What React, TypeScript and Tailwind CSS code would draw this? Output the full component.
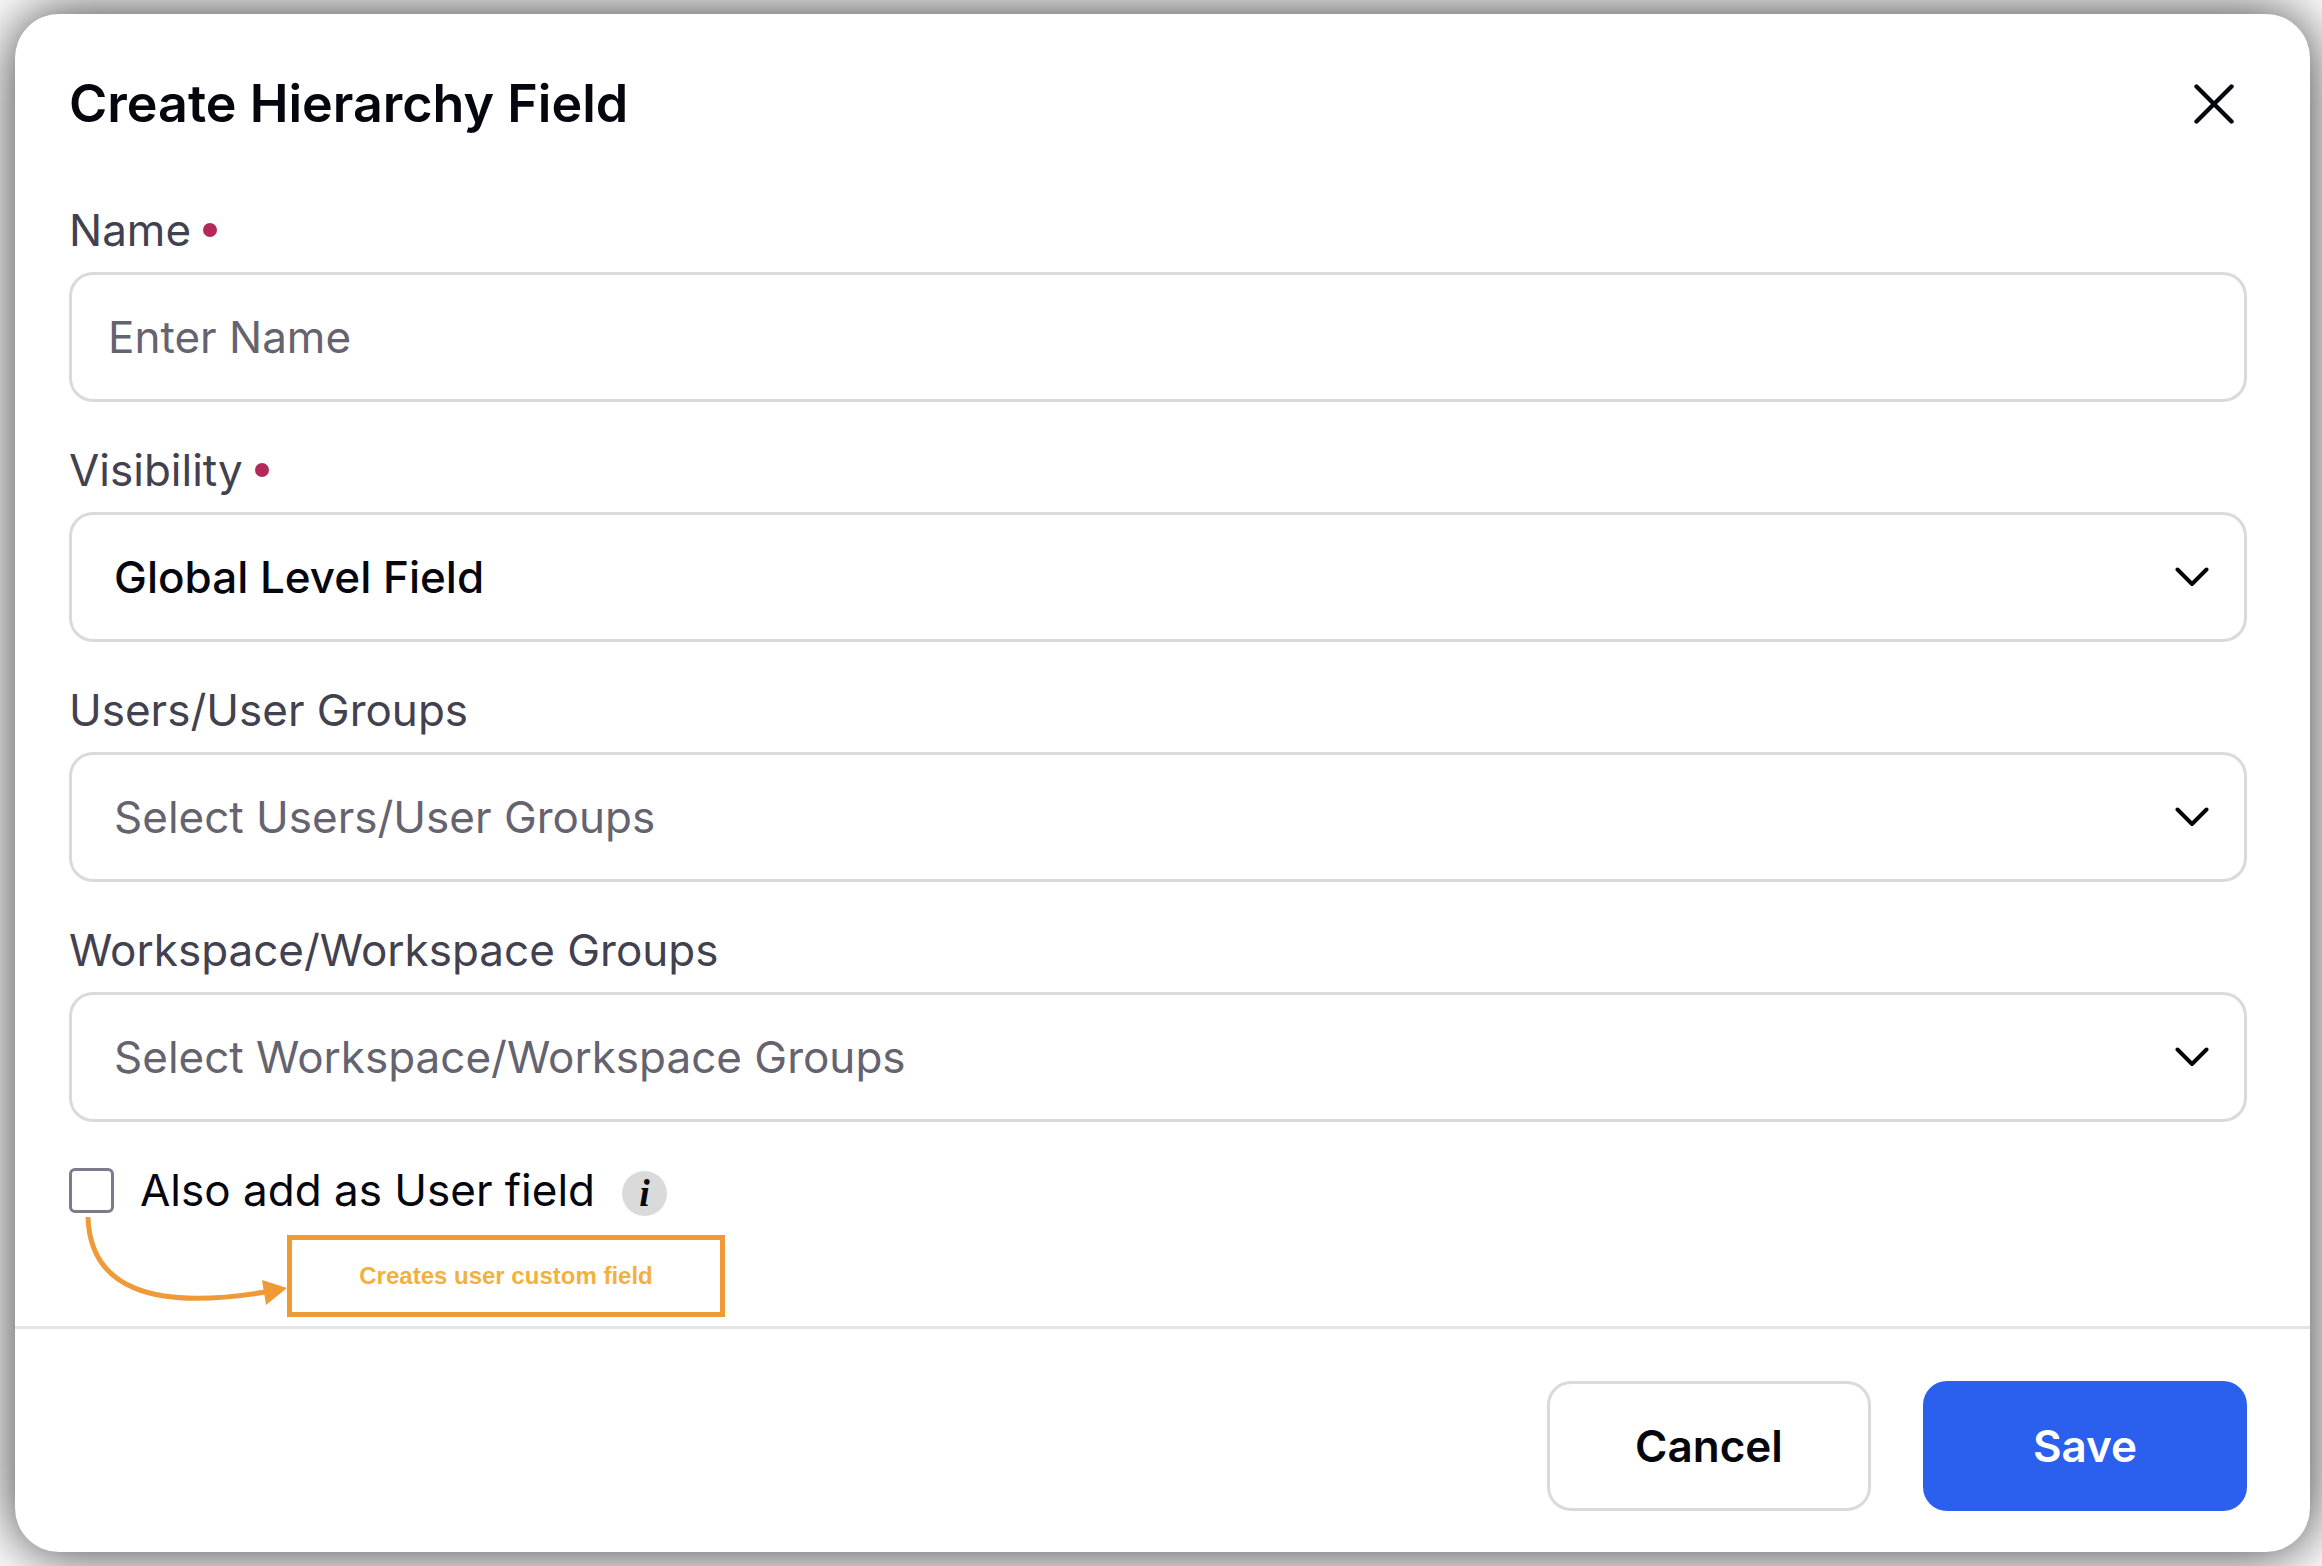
import { useState } from "react";
import type { ReactNode } from "react";

type SelectFieldProps = {
  id: string;
  label: string;
  required?: boolean;
  placeholder?: string;
  options: string[];
  defaultValue?: string;
};

const boxClass =
  "h-[130px] w-full rounded-[24px] border-3 border-[#dadada] bg-white outline-none focus:border-[#2b5fee]";

function FieldLabel({ htmlFor, required, children }: { htmlFor: string; required?: boolean; children: ReactNode }) {
  return (
    <label htmlFor={htmlFor} className="flex h-[80px] items-center gap-3 pb-1 text-[#42414f]">
      {children}
      {required && <span aria-hidden="true" className="size-[14px] rounded-full bg-[#b5285a]" />}
    </label>
  );
}

function ChevronIcon() {
  return (
    <svg
      viewBox="0 0 34 20"
      className="pointer-events-none absolute top-1/2 right-[38px] h-[20px] w-[34px] -translate-y-1/2"
      fill="none"
      stroke="#06060f"
      strokeWidth="4"
      strokeLinecap="round"
      strokeLinejoin="round"
      aria-hidden="true"
    >
      <path d="M2.5 2.5 17 17 31.5 2.5" />
    </svg>
  );
}

function SelectField({ id, label, required, placeholder, options, defaultValue = "" }: SelectFieldProps) {
  const [value, setValue] = useState(defaultValue);

  return (
    <div>
      <FieldLabel htmlFor={id} required={required}>
        {label}
      </FieldLabel>
      <div className="relative">
        <select
          id={id}
          value={value}
          onChange={(e) => setValue(e.target.value)}
          className={`${boxClass} appearance-none px-[42px] ${value ? "font-medium text-[#06060f]" : "text-[#64636f]"}`}
        >
          {placeholder && <option value="">{placeholder}</option>}
          {options.map((o) => (
            <option key={o} value={o}>
              {o}
            </option>
          ))}
        </select>
        <ChevronIcon />
      </div>
    </div>
  );
}

// Arrow and callout that hang below the checkbox
function Callout() {
  return (
    <div className="absolute top-[54px] left-[16px] flex items-start">
      <svg viewBox="0 0 202 96" className="h-[96px] w-[202px]" fill="none" aria-hidden="true">
        <path d="M3 1C5 71 65 95 180 76" stroke="#f09a37" strokeWidth="5" />
        <path d="M177 64 202 72 181 89Z" fill="#f09a37" />
      </svg>
      <div className="mt-[19px] flex h-[82px] w-[438px] items-center justify-center border-5 border-[#f09a37] font-['Liberation_Sans',Arial,sans-serif] text-[24px] font-bold text-[#f2b13c]">
        Creates user custom field
      </div>
    </div>
  );
}

function App() {
  const [name, setName] = useState("");
  const [addAsUserField, setAddAsUserField] = useState(false);

  return (
    <div className="flex min-h-screen flex-col overflow-hidden bg-white py-[14px] pr-[12px] pl-[15px] font-[Inter,'Liberation_Sans',sans-serif] text-[44px] leading-[56px]">
      <div
        role="dialog"
        aria-labelledby="dialog-title"
        className="flex flex-1 flex-col rounded-[44px] bg-white shadow-[0_0_60px_rgba(0,0,0,0.8)]"
      >
        <header className="flex items-center justify-between pt-[56px] pr-[72px] pl-[54px]">
          <h1 id="dialog-title" className="text-[52px] leading-[68px] font-semibold text-[#06060f]">
            Create Hierarchy Field
          </h1>
          <button type="button" aria-label="Close" className="flex size-[48px] items-center justify-center">
            <svg viewBox="0 0 40 40" className="size-[40px]" fill="none" stroke="#06060f" strokeWidth="4.4" strokeLinecap="round" aria-hidden="true">
              <path d="M2.5 2.5 37.5 37.5M37.5 2.5 2.5 37.5" />
            </svg>
          </button>
        </header>

        <form id="field-form" className="flex flex-col gap-[30px] pt-[54px] pr-[63px] pl-[54px]" onSubmit={(e) => e.preventDefault()}>
          <div>
            <FieldLabel htmlFor="name" required>
              Name
            </FieldLabel>
            <input
              id="name"
              type="text"
              placeholder="Enter Name"
              value={name}
              onChange={(e) => setName(e.target.value)}
              className={`${boxClass} px-[36px] text-[#06060f] placeholder:text-[#64636f]`}
            />
          </div>
          <SelectField
            id="visibility"
            label="Visibility"
            required
            options={["Global Level Field", "Workspace Level Field"]}
            defaultValue="Global Level Field"
          />
          <SelectField
            id="users"
            label="Users/User Groups"
            placeholder="Select Users/User Groups"
            options={["All Users"]}
          />
          <SelectField
            id="workspaces"
            label="Workspace/Workspace Groups"
            placeholder="Select Workspace/Workspace Groups"
            options={["All Workspaces"]}
          />

          <div className="relative mt-[10px] flex items-center">
            <input
              id="user-field"
              type="checkbox"
              checked={addAsUserField}
              onChange={(e) => setAddAsUserField(e.target.checked)}
              className="size-[45px] appearance-none rounded-[6px] border-3 border-[#7c7a8b] bg-white checked:bg-[#2b5fee]"
            />
            <label htmlFor="user-field" className="ml-[26px] text-[#06060f]">
              Also add as User field
            </label>
            <button
              type="button"
              aria-label="More information"
              className="mt-[6px] ml-[27px] flex size-[45px] items-center justify-center rounded-full bg-[#dadada] font-['Liberation_Serif',serif] text-[38px] leading-[38px] font-bold text-[#06060f] italic"
            >
              i
            </button>
            <Callout />
          </div>
        </form>

        <footer className="mt-auto flex justify-end gap-[52px] border-t-3 border-[#e4e4e4] pt-[52px] pr-[63px] pb-[41px] font-semibold">
          <button type="button" className="h-[130px] w-[324px] rounded-[24px] border-3 border-[#dadada] bg-white text-[#06060f]">
            Cancel
          </button>
          <button type="submit" form="field-form" className="h-[130px] w-[324px] rounded-[24px] bg-[#2b5fee] text-white">
            Save
          </button>
        </footer>
      </div>
    </div>
  );
}

export default App;
